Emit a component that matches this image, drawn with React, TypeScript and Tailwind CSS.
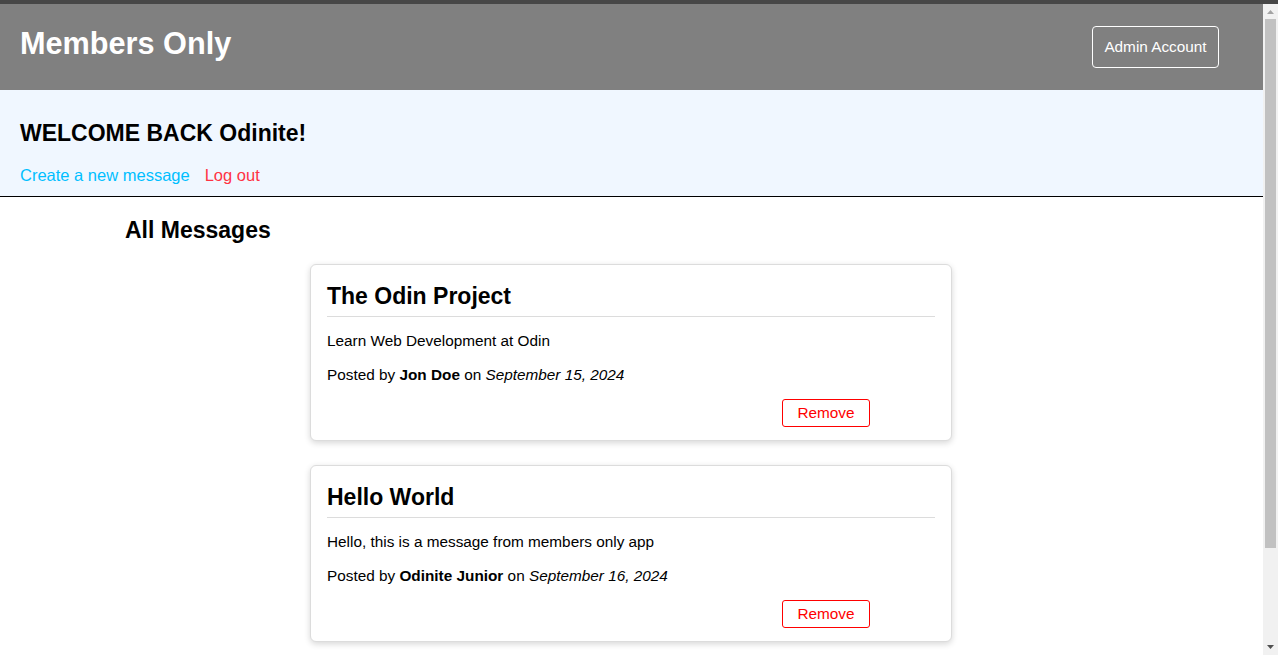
import React from "react";

type Msg = { title: string; body: string; author: string; date: string };

const messages: Msg[] = [
  {
    title: "The Odin Project",
    body: "Learn Web Development at Odin",
    author: "Jon Doe",
    date: "September 15, 2024",
  },
  {
    title: "Hello World",
    body: "Hello, this is a message from members only app",
    author: "Odinite Junior",
    date: "September 16, 2024",
  },
];

function Card({ m }: { m: Msg }) {
  return (
    <div className="w-[642px] border border-[#dcdcdc] rounded-[6px] bg-white shadow-[0_2px_6px_rgba(0,0,0,0.16)] px-[16px] pt-[18px] pb-[13px] flex flex-col">
      <h3 className="text-[23px] leading-[26px] font-bold text-black">{m.title}</h3>
      <div className="mt-[7px] h-px bg-[#dcdcdc]" />
      <p className="mt-[15px] text-[15.33px] leading-[18px] text-black">{m.body}</p>
      <p className="mt-[16px] text-[15.33px] leading-[18px] text-black">
        Posted by <strong className="font-bold">{m.author}</strong> on <em className="italic">{m.date}</em>
      </p>
      <div className="mt-[15px] flex justify-end pr-[65px]">
        <button className="w-[88px] h-[28px] border border-[#ff0000] rounded-[3px] text-[#ff0000] text-[15.33px] leading-[18px] bg-white flex items-center justify-center">
          Remove
        </button>
      </div>
    </div>
  );
}

function FakeScrollbar() {
  return (
    <div className="fixed right-0 top-[4px] bottom-0 w-[15px] bg-[#f1f1f1]">
      <svg className="absolute left-0 top-0" width="15" height="15" viewBox="0 0 15 15">
        <polygon points="4,10 11,10 7.5,6" fill="#a3a3a3" />
      </svg>
      <div className="absolute left-[2px] top-[15px] w-[11px] h-[529px] bg-[#c1c1c1]" />
      <svg className="absolute left-0 bottom-0" width="15" height="15" viewBox="0 0 15 15">
        <polygon points="4,5 11,5 7.5,9" fill="#505050" />
      </svg>
    </div>
  );
}

export default function App() {
  return (
    <div className="min-h-screen bg-white font-['Liberation_Sans',Arial,sans-serif]">
      <div className="h-[4px] bg-[#474747]" />
      <div className="mr-[15px] pb-[126px]">
        <header className="h-[86px] bg-[#808080] flex items-start justify-between pl-[20px] pr-[44px]">
          <h1 className="mt-[21px] text-[30.67px] leading-[36px] font-bold text-white">Members Only</h1>
          <button className="mt-[22px] w-[127px] h-[42px] border border-white rounded-[4px] text-white text-[15.33px] leading-[18px] flex items-center justify-center">
            Admin Account
          </button>
        </header>
        <section className="bg-[#f0f7ff] border-b border-black pl-[20px] pt-[30px] pb-[11px]">
          <h2 className="text-[23px] leading-[26px] font-bold text-black">WELCOME BACK Odinite!</h2>
          <div className="mt-[20px] flex gap-[15px] text-[16.5px] leading-[19px]">
            <a className="text-[#00bfff]">Create a new message</a>
            <a className="text-[#ff3344]">Log out</a>
          </div>
        </section>
        <main>
          <h2 className="mt-[20px] pl-[125px] text-[23px] leading-[26px] font-bold text-black">All Messages</h2>
          <div className="mt-[21px] pr-[1px] flex flex-col items-center gap-[24px]">
            {messages.map((m) => (
              <Card key={m.title} m={m} />
            ))}
          </div>
        </main>
      </div>
      <FakeScrollbar />
    </div>
  );
}
